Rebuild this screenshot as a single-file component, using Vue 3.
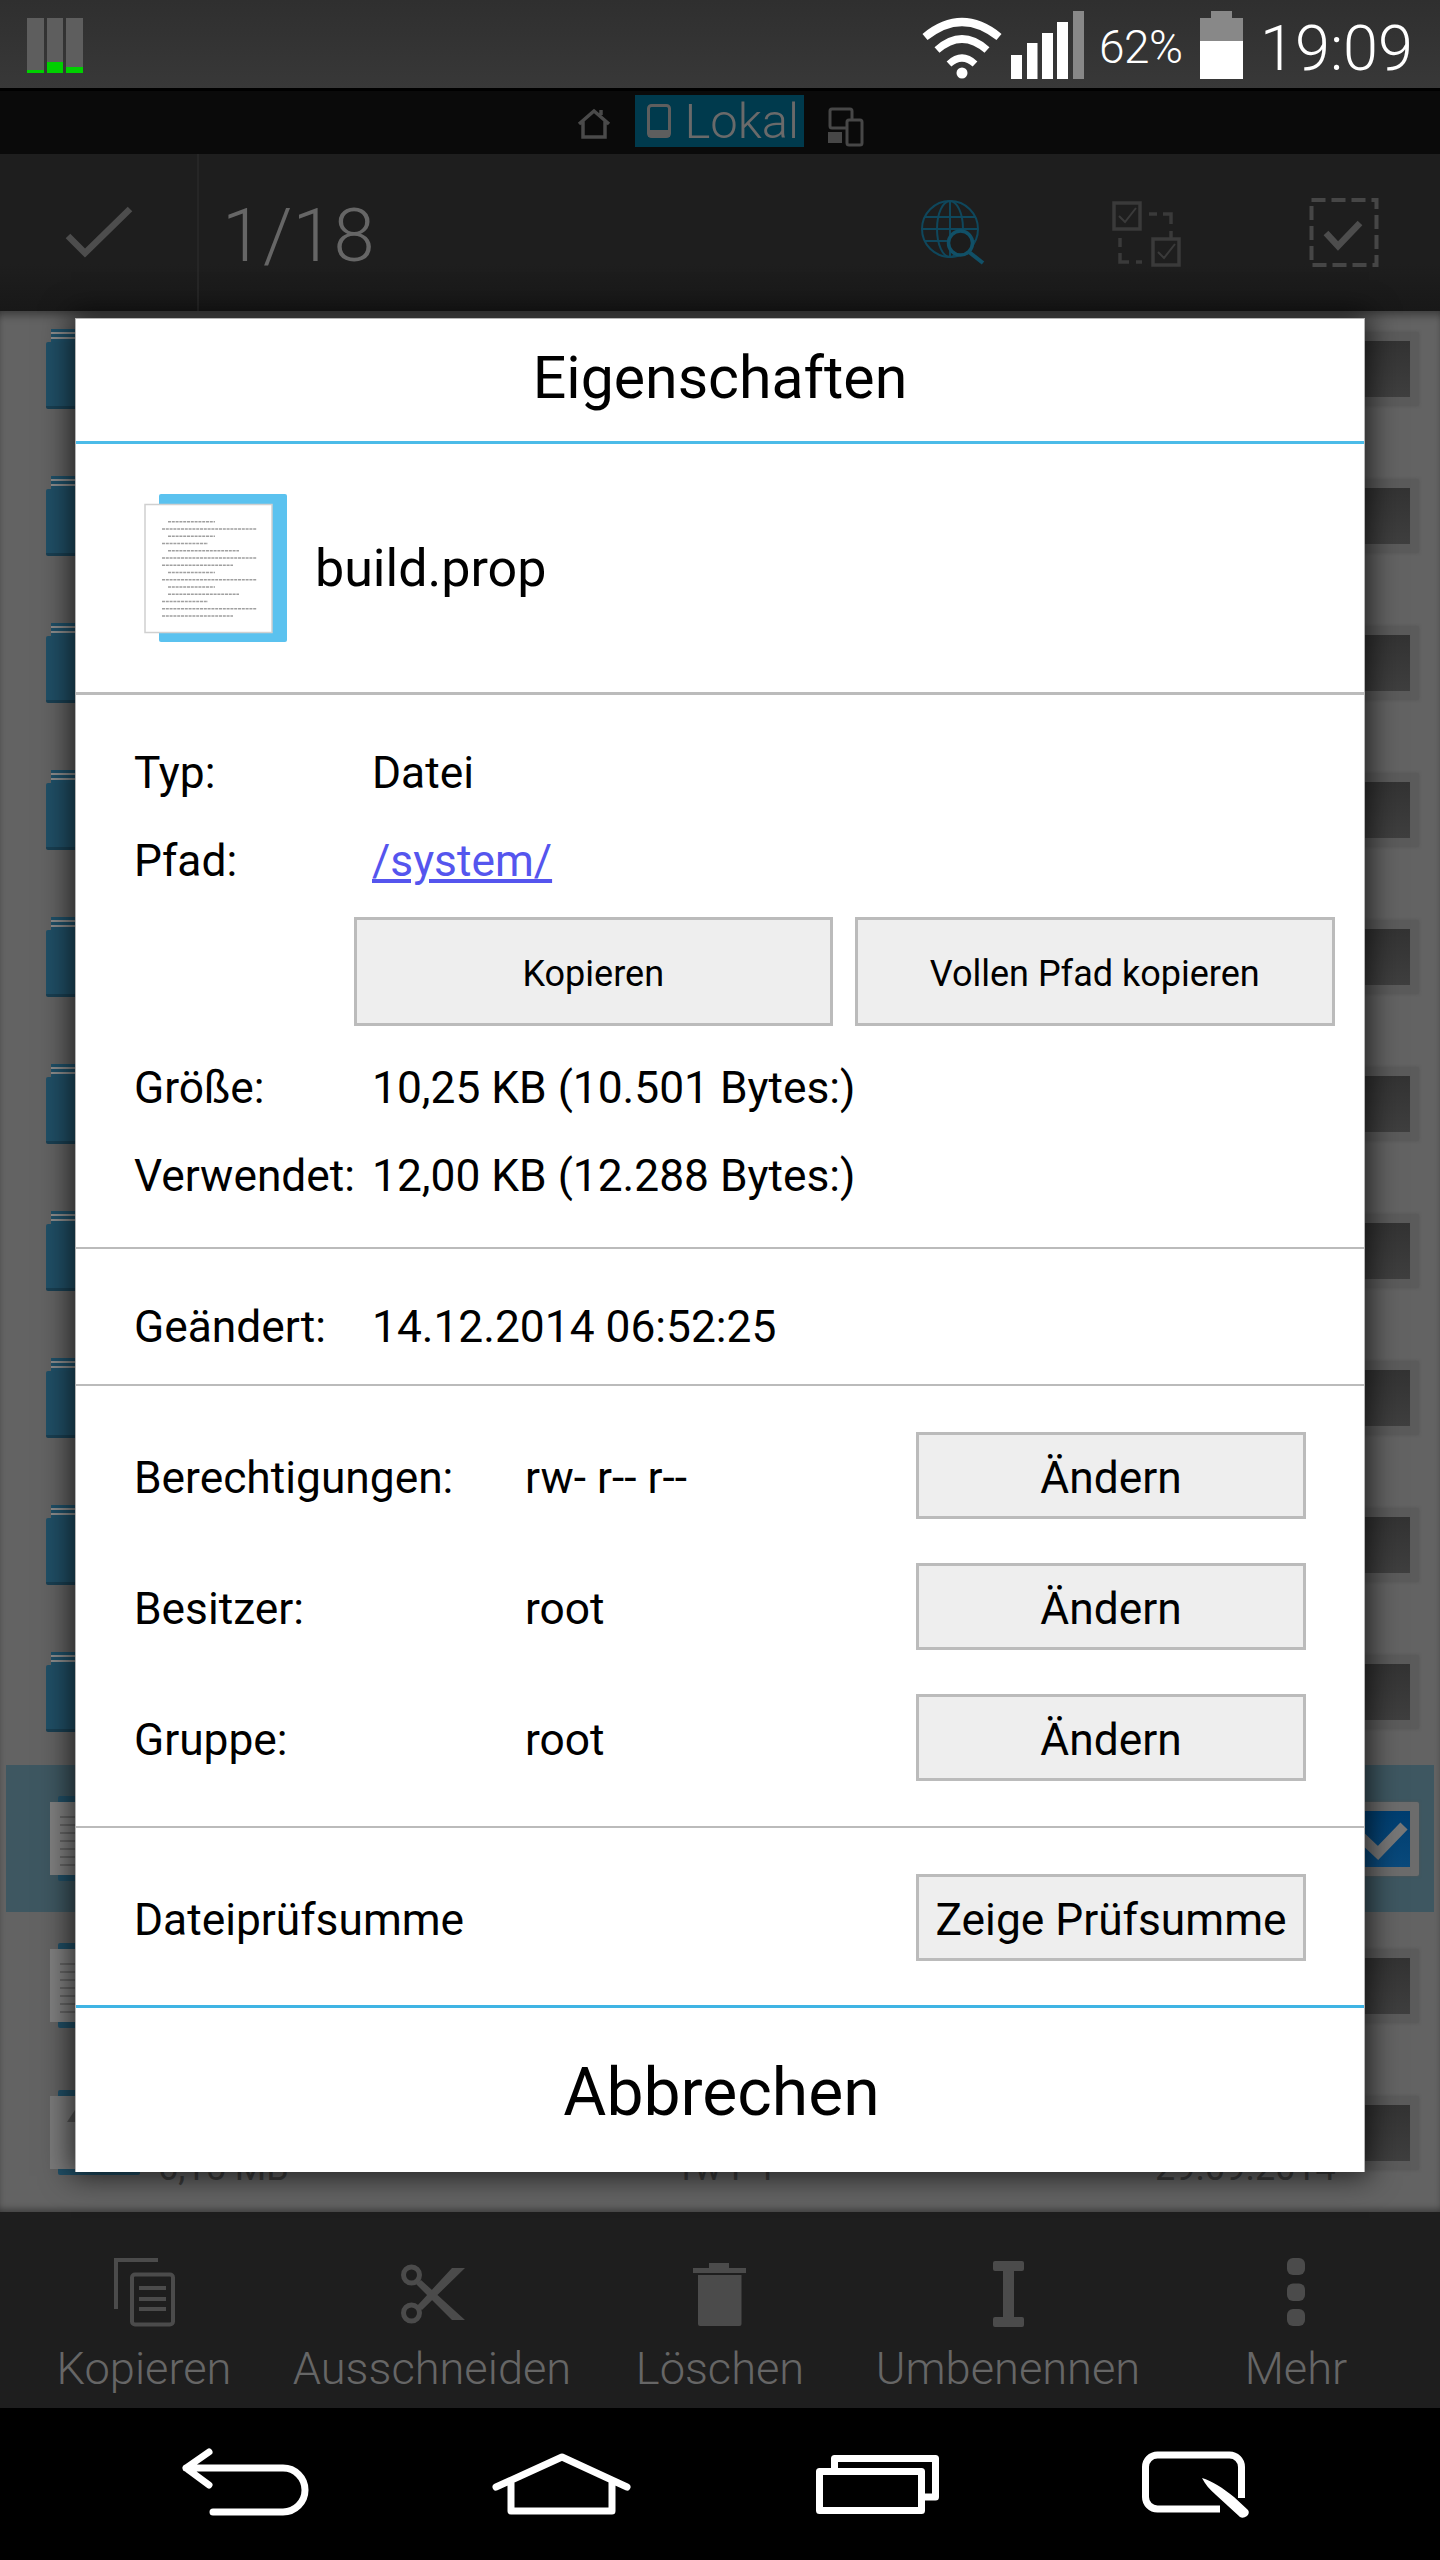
<script setup>
const rows = Array.from({ length: 13 }, (_, i) => ({
  id: i,
  kind: i < 10 ? 'folder' : 'file',
  selected: i === 10,
  last: i === 12,
}))
const docLines = [
  [168, 215], [162, 257], [168, 215], [162, 208], [168, 239], [162, 257], [162, 233],
  [168, 215], [162, 257], [168, 215], [168, 239], [162, 208], [162, 257], [162, 233],
]
const actions = [
  { label: 'Kopieren', cx: 144 },
  { label: 'Ausschneiden', cx: 432 },
  { label: 'Löschen', cx: 720 },
  { label: 'Umbenennen', cx: 1008 },
  { label: 'Mehr', cx: 1296 },
]
const perms = [
  { label: 'Berechtigungen:', value: 'rw- r-- r--' },
  { label: 'Besitzer:', value: 'root' },
  { label: 'Gruppe:', value: 'root' },
]
</script>

<template>
  <div class="screen">
    <header class="status">
      <div class="meters">
        <div class="meter"><i style="height:3px"></i></div>
        <div class="meter"><i style="height:11px"></i></div>
        <div class="meter"><i style="height:6px"></i></div>
      </div>
      <div class="status-right">
        <svg class="sig" viewBox="921 0 162 88" width="162" height="88">
          <g fill="none" stroke="#fff" stroke-linecap="butt">
            <path d="M924 37Q961 7 998 37" stroke-width="8" />
            <path d="M936 50Q961 28 986 50" stroke-width="7.5" />
            <path d="M948 64Q961 52 974 64" stroke-width="7" />
          </g>
          <circle cx="961" cy="73" r="5.5" fill="#fff" />
          <rect x="1010" y="55" width="11" height="24" fill="#fff" />
          <rect x="1026" y="43" width="10.500" height="36" fill="#fff" />
          <rect x="1041" y="33" width="11" height="46" fill="#fff" />
          <rect x="1056" y="22" width="11" height="57" fill="#fff" />
          <rect x="1072" y="11" width="11" height="68" fill="#888" />
        </svg>
        <span class="pct">62%</span>
        <svg class="batt" viewBox="1198 0 43 88" width="43" height="88">
          <path d="M1209 11h21v7h11v23h-43v-23h11z" fill="#888" />
          <rect x="1198" y="41" width="43" height="38" fill="#fff" />
        </svg>
        <span class="time">19:09</span>
      </div>
    </header>
    <div class="blackline"></div>

    <nav class="strip">
      <svg viewBox="575 103 38 38" width="38" height="38">
        <path d="M579 122L594 109L609 122M583 119V135H605V119M601 113V108" fill="none" stroke="#4a4a4a" stroke-width="3.500" />
      </svg>
      <div class="tab">
        <svg viewBox="645 103 28 38" width="28" height="38">
          <rect x="648.500" y="106.500" width="21" height="31" rx="3" fill="none" stroke="#5e5e5e" stroke-width="3" />
          <rect x="648" y="131" width="22" height="7" fill="#5e5e5e" />
        </svg>
        <span>Lokal</span>
      </div>
      <svg viewBox="827 101 40 43" width="40" height="43">
        <rect x="831" y="105" width="22" height="19" rx="2" fill="none" stroke="#474747" stroke-width="3" />
        <path d="M829 128h14v11h-14z" fill="#474747" />
        <rect x="848" y="116" width="15" height="25" rx="2" fill="#0a0a0a" stroke="#474747" stroke-width="3" />
      </svg>
    </nav>

    <div class="toolbar">
      <div class="confirm">
        <svg viewBox="60 200 80 66" width="80" height="66">
          <path d="M68 236L85 253L130 209" fill="none" stroke="#4d4d4d" stroke-width="6.500" />
        </svg>
      </div>
      <div class="count">1/18</div>
      <div class="tool">
        <svg viewBox="911 194 80 80" width="80" height="80">
          <g fill="none" stroke="#0f475c" stroke-width="2">
            <circle cx="948" cy="229" r="28" />
            <ellipse cx="948" cy="229" rx="13" ry="28" />
            <path d="M948 201V257M922 217H974M920 229H976M922 241H974" />
          </g>
          <circle cx="958.500" cy="243" r="12" fill="#1c1c1c" stroke="#115067" stroke-width="3.500" />
          <path d="M967 252L981 263" stroke="#115067" stroke-width="4" />
        </svg>
      </div>
      <div class="tool">
        <svg viewBox="1108 194 80 80" width="80" height="80">
          <g fill="none" stroke="#3a3a3a" stroke-width="3.500">
            <rect x="1114" y="203" width="26" height="26" />
            <rect x="1153" y="239" width="26" height="26" />
            <path d="M1149 214h8M1163 214h8v10M1171 231v7M1120 238v9M1120 253v9h9M1136 262h6" />
          </g>
          <path d="M1119 216l6 6l11 -14M1158 252l6 6l11 -14" fill="none" stroke="#3a3a3a" stroke-width="2" />
        </svg>
      </div>
      <div class="tool">
        <svg viewBox="1302 194 80 80" width="80" height="80">
          <rect x="1310.500" y="200" width="65" height="65" fill="none" stroke="#464646" stroke-width="4" stroke-dasharray="14 6" />
          <path d="M1325 233L1337 246L1359 223" fill="none" stroke="#4d4d4d" stroke-width="6.500" />
        </svg>
      </div>
    </div>

    <main class="list">
      <div v-for="r in rows" :key="r.id" class="row" :class="{ sel: r.selected }">
        <div v-if="r.kind === 'folder'" class="folder">
          <div class="folder-tab"></div>
          <div class="folder-front"></div>
        </div>
        <div v-else class="file" :class="{ plain: r.last }">
          <div class="file-back"></div>
          <div class="file-page"></div>
        </div>
        <div v-if="r.last" class="meta">
          <span>6,15 MB</span>
          <span>rw-r--r--</span>
          <span>29.09.2014</span>
        </div>
        <div class="chk">
          <svg v-if="r.selected" viewBox="0 0 56 56" width="56" height="56">
            <path d="M6 24L25 42L51 15" fill="none" stroke="#777" stroke-width="10" />
          </svg>
        </div>
      </div>
    </main>

    <footer class="actions">
      <div v-for="(a, i) in actions" :key="a.label" class="action">
        <svg :viewBox="`${a.cx - 40} 2254 80 76`" width="80" height="76">
          <g v-if="i === 0" fill="none" stroke="#4b4b4b" stroke-width="4">
            <path d="M116 2309V2260H158" />
            <rect x="132" y="2274.500" width="41" height="50" rx="3" />
            <path d="M139 2288H166M139 2299H166M139 2309H166" />
          </g>
          <g v-else-if="i === 1">
            <circle cx="411.500" cy="2275" r="8" fill="none" stroke="#4b4b4b" stroke-width="5" />
            <circle cx="411.500" cy="2313" r="8" fill="none" stroke="#4b4b4b" stroke-width="5" />
            <path d="M416 2284L421 2280L465 2320H452ZM417 2306L452 2268H465L422 2310Z" fill="#4b4b4b" />
          </g>
          <g v-else-if="i === 2" fill="#4b4b4b">
            <rect x="709" y="2263" width="20" height="6" />
            <rect x="693" y="2268" width="53" height="5" />
            <path d="M698 2275H741.500V2324a2 2 0 0 1 -2 2H700a2 2 0 0 1 -2 -2z" />
          </g>
          <g v-else-if="i === 3" fill="#4b4b4b">
            <rect x="993" y="2261" width="31" height="10" rx="2" />
            <rect x="1003" y="2268" width="11" height="52" />
            <rect x="993" y="2317" width="31" height="10" rx="2" />
          </g>
          <g v-else fill="#4b4b4b">
            <rect x="1287" y="2258" width="18" height="17" rx="6" />
            <rect x="1287" y="2283.500" width="18" height="17.500" rx="6" />
            <rect x="1287" y="2309" width="18" height="17" rx="6" />
          </g>
        </svg>
        <span>{{ a.label }}</span>
      </div>
    </footer>

    <div class="nav">
      <div class="nav-cell">
        <svg viewBox="166 2444 160 80" width="160" height="80">
          <path d="M209 2452L186 2468L209 2485M186 2468H283A22 22 0 0 1 283 2512H213" fill="none" stroke="#fff" stroke-width="7" stroke-linecap="round" stroke-linejoin="round" />
        </svg>
      </div>
      <div class="nav-cell">
        <svg viewBox="482 2444 160 80" width="160" height="80">
          <path d="M496 2487L562 2457L627 2487M511 2481V2511H612V2481" fill="none" stroke="#fff" stroke-width="7" stroke-linecap="round" stroke-linejoin="round" />
        </svg>
      </div>
      <div class="nav-cell">
        <svg viewBox="798 2444 160 80" width="160" height="80">
          <rect x="819.500" y="2471.500" width="102" height="39" fill="none" stroke="#fff" stroke-width="7" stroke-linejoin="round" />
          <path d="M834.500 2468V2458.500H935.500V2497H925" fill="none" stroke="#fff" stroke-width="7" stroke-linejoin="round" />
        </svg>
      </div>
      <div class="nav-cell">
        <svg viewBox="1112 2444 160 80" width="160" height="80">
          <path d="M1239.500 2498V2467a12 12 0 0 0 -12 -12H1155.500a12 12 0 0 0 -12 12V2497a12 12 0 0 0 12 12H1218" fill="none" stroke="#fff" stroke-width="7" />
          <path d="M1200 2478C1210 2481 1221 2488 1232 2497L1246 2510Q1248 2513 1245 2516Q1241 2519 1238 2517L1214 2495C1208 2490 1203 2484 1200 2478Z" fill="#fff" />
        </svg>
      </div>
    </div>

    <section class="dialog">
      <h1 class="title">Eigenschaften</h1>

      <div class="file-row">
        <svg viewBox="140 488 152 158" width="152" height="158">
          <rect x="159" y="493" width="128" height="148" rx="2" fill="#5bc2ef" />
          <rect x="145" y="503.500" width="127" height="128" fill="#fff" stroke="#d0d0d0" stroke-width="1.500" />
          <path
            v-for="(l, i) in docLines"
            :key="i"
            :d="`M${l[0]} ${520.7 + i * 7.25}H${l[1]}`"
            stroke="#a0a0a0"
            stroke-width="1.500"
            stroke-dasharray="3 0.800"
          />
        </svg>
        <span class="fname">build.prop</span>
      </div>

      <div class="info">
        <div class="line"><span class="key">Typ:</span><span>Datei</span></div>
        <div class="line"><span class="key">Pfad:</span><a class="link">/system/</a></div>
        <div class="btns">
          <div class="btn small grow-a">Kopieren</div>
          <div class="btn small grow-b">Vollen Pfad kopieren</div>
        </div>
        <div class="line"><span class="key">Größe:</span><span>10,25 KB (10.501 Bytes:)</span></div>
        <div class="line"><span class="key">Verwendet:</span><span>12,00 KB (12.288 Bytes:)</span></div>
      </div>

      <div class="modified">
        <span class="key">Geändert:</span><span>14.12.2014 06:52:25</span>
      </div>

      <div class="perms">
        <div v-for="p in perms" :key="p.label" class="perm">
          <span class="pkey">{{ p.label }}</span>
          <span class="pval">{{ p.value }}</span>
          <div class="btn wide">Ändern</div>
        </div>
      </div>

      <div class="checksum">
        <span class="sum-label">Dateiprüfsumme</span>
        <div class="btn wide">Zeige Prüfsumme</div>
      </div>

      <div class="cancel">Abbrechen</div>
    </section>
  </div>
</template>

<style>
html, body { margin: 0; background: #000; }
</style>

<style scoped>
* { box-sizing: border-box; }
svg { display: block; flex: none; }
.screen {
  position: relative;
  width: 1440px;
  height: 2560px;
  overflow: hidden;
  display: flex;
  flex-direction: column;
  font-family: Roboto, "Liberation Sans", sans-serif;
  color: #000;
  background: #000;
}
.status {
  height: 88px;
  flex: none;
  display: flex;
  justify-content: space-between;
  background: linear-gradient(#2f2f2f, #383838);
}
.meters { display: flex; gap: 3px; padding: 18px 0 15px 27px; }
.meter {
  width: 16.500px;
  background: #5e5e5e;
  display: flex;
  align-items: flex-end;
}
.meter i { display: block; width: 100%; background: #00d000; }
.status-right { display: flex; align-items: flex-start; padding-right: 27px; color: #fff; }
.pct { width: 101px; margin-left: 15px; font-size: 46px; font-weight: 300; line-height: 94px; letter-spacing: -0.500px; }
.time { margin-left: 17px; font-size: 63px; font-weight: 300; line-height: 98px; }
.blackline { height: 3px; flex: none; background: #000; }
.strip {
  height: 63px;
  flex: none;
  padding-top: 4px;
  display: flex;
  align-items: flex-start;
  justify-content: center;
  gap: 22px;
  background: #0a0a0a;
}
.strip > svg { margin-top: 10px; }
.tab {
  width: 169px;
  height: 52px;
  display: flex;
  align-items: center;
  gap: 12px;
  padding-left: 10px;
  background: #003a4d;
  color: #6a6a6a;
  font-size: 49px;
  font-weight: 300;
  white-space: nowrap;
}
.toolbar {
  height: 157px;
  flex: none;
  display: flex;
  align-items: flex-start;
  background: linear-gradient(#1e1e1e 70%, #181818);
}
.confirm {
  width: 199px;
  height: 157px;
  border-right: 2px solid #262626;
  padding: 46px 0 0 60px;
}
.count {
  flex: 1;
  padding-left: 23px;
  font-size: 74px;
  font-weight: 300;
  line-height: 164px;
  color: #666;
}
.tool { width: 195px; display: flex; justify-content: center; padding-top: 40px; }
.list {
  height: 1901px;
  flex: none;
  overflow: hidden;
  background: #636363;
  box-shadow: inset 0 -6px 6px -3px rgba(0, 0, 0, 0.35), inset 0 8px 8px -4px rgba(0, 0, 0, 0.4);
}
.row {
  position: relative;
  height: 147px;
  margin: 0 6px;
  display: flex;
  align-items: center;
  justify-content: space-between;
  padding: 0 15px 0 40px;
}
.row:first-child { margin-top: -16px; }
.row.sel { background: #3e5761; }
.folder { width: 90px; height: 80px; position: relative; }
.folder-tab {
  position: absolute;
  left: 5px;
  top: 0;
  right: 0;
  height: 14px;
  background: repeating-linear-gradient(#1f5068 0 3px, #8c8c8c 3px 5px);
}
.folder-front {
  position: absolute;
  left: 0;
  right: 0;
  top: 13px;
  bottom: 0;
  border-radius: 2px;
  background: #204f66;
  border-bottom: 3px solid #193f52;
}
.file { width: 90px; height: 85px; position: relative; margin-left: 4px; }
.file-back { position: absolute; left: 8px; right: 0; top: 0; bottom: 0; background: #204f66; border-radius: 2px; }
.file-page {
  position: absolute;
  left: 0;
  right: 8px;
  top: 6px;
  bottom: 6px;
  background: #818181 repeating-linear-gradient(transparent 0 6px, #666 6px 8px) 10px 8px no-repeat;
  background-size: 70px 56px;
}
.file.plain .file-page { background: #7b7b7b; }
.file.plain .file-page::after {
  content: "";
  position: absolute;
  left: 17px;
  top: 14px;
  width: 16px;
  height: 12px;
  background: #555;
  clip-path: polygon(50% 0, 100% 100%, 0 100%);
}
.meta {
  position: absolute;
  left: 0;
  top: 88px;
  width: 100%;
  font-size: 36px;
  color: #3a3a3a;
}
.meta span { position: absolute; top: 0; white-space: nowrap; }
.meta span:nth-child(1) { left: 152px; }
.meta span:nth-child(2) { left: 676px; }
.meta span:nth-child(3) { left: 1149px; }
.chk {
  width: 76px;
  height: 74px;
  padding: 9px;
  background: #5b5b5b;
  box-shadow: 0 0 3px #555;
  border-radius: 2px;
  position: relative;
}
.chk::after {
  content: "";
  position: absolute;
  inset: 9px;
  background: linear-gradient(#333, #3f3f3f);
}
.chk svg { position: absolute; left: 10px; top: 9px; z-index: 1; }
.row.sel .chk { background: #6c6c6c; }
.row.sel .chk::after { background: linear-gradient(#003e70, #0a4a7c); }
.actions {
  height: 196px;
  flex: none;
  display: flex;
  padding-top: 42px;
  background: #1e1e1e;
}
.action {
  width: 288px;
  display: flex;
  flex-direction: column;
  align-items: center;
  color: #666;
  font-size: 45.200px;
  font-weight: 300;
  line-height: 52px;
  white-space: nowrap;
}
.action span { margin-top: 13px; }
.nav {
  height: 152px;
  flex: none;
  display: flex;
  padding: 0 88px;
  background: #000;
}
.nav-cell { width: 316px; display: flex; justify-content: center; padding-top: 36px; }
.dialog {
  position: absolute;
  z-index: 5;
  left: 75px;
  top: 318px;
  width: 1290px;
  height: 1854px;
  background: #fff;
  border: solid #b5b5b5;
  border-width: 1px 1px 0;
  box-shadow: 0 0 28px 4px rgba(0, 0, 0, 0.7);
  display: flex;
  flex-direction: column;
  font-size: 44.300px;
}
.title {
  margin: 0;
  height: 125px;
  flex: none;
  border-bottom: 3px solid #4bbbe8;
  text-align: center;
  font-size: 59px;
  font-weight: 400;
  line-height: 118px;
}
.file-row {
  height: 251px;
  flex: none;
  border-bottom: 3px solid #bbb;
  display: flex;
  align-items: center;
  gap: 23px;
  padding-left: 64px;
}
.fname { font-size: 52px; }
.info {
  height: 554px;
  flex: none;
  border-bottom: 2px solid #bbb;
  padding: 33px 29px 0 58px;
}
.line { display: flex; align-items: center; height: 88px; padding-top: 2px; }
.key { width: 238px; flex: none; }
.link { color: #5555ee; text-decoration: underline; }
.btns { display: flex; gap: 22px; margin: 13px 0 17px 220px; }
.btn {
  background: #eee;
  border: 3px solid #bbb;
  display: flex;
  align-items: center;
  justify-content: center;
  padding-top: 5px;
}
.btn.small { height: 109px; font-size: 36px; }
.grow-a { width: 479px; }
.grow-b { width: 481px; }
.modified {
  height: 137px;
  flex: none;
  border-bottom: 2px solid #bbb;
  padding: 20px 0 0 58px;
  display: flex;
  align-items: center;
}
.perms {
  height: 442px;
  flex: none;
  border-bottom: 2px solid #bbb;
  padding: 46px 58px 0 58px;
  display: flex;
  flex-direction: column;
  gap: 44px;
}
.perm { display: flex; align-items: center; }
.pkey, .pval, .sum-label { padding-top: 5px; }
.pkey { width: 391px; flex: none; }
.pval { flex: 1; }
.btn.wide { width: 390px; height: 87px; flex: none; }
.checksum {
  height: 180px;
  flex: none;
  border-bottom: 3px solid #3fb4e4;
  padding: 2px 58px 0 58px;
  display: flex;
  align-items: center;
  justify-content: space-between;
}
.cancel {
  flex: 1;
  display: flex;
  align-items: center;
  justify-content: center;
  font-size: 66px;
  padding: 4px 0 0 3px;
}
</style>
